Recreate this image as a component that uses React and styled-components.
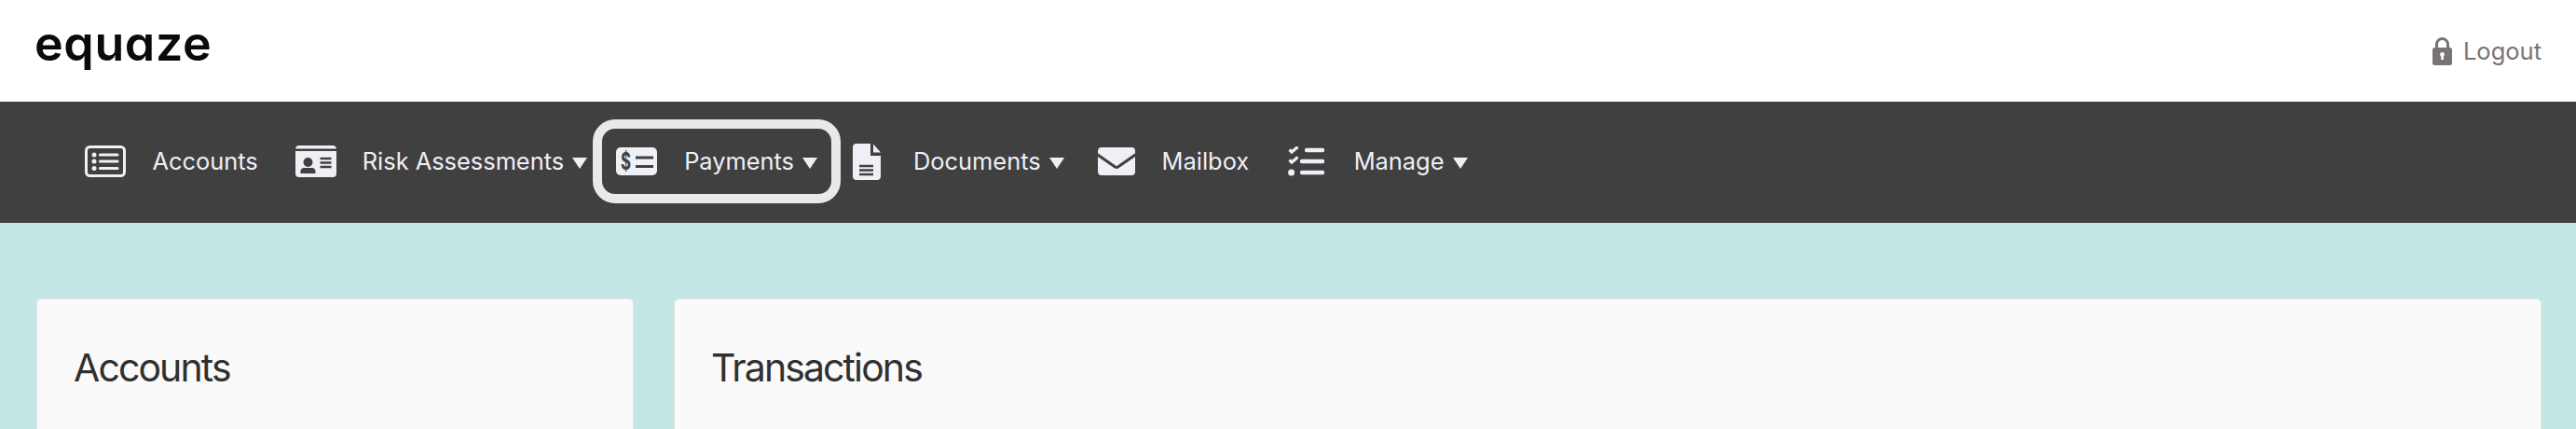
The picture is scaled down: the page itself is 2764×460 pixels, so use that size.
import React from 'react'
import styled, { createGlobalStyle } from 'styled-components'

const GlobalStyle = createGlobalStyle`
  html, body {
    margin: 0;
    padding: 0;
    background: #c4e7e6;
    font-family: Inter, "Liberation Sans", sans-serif;
  }
  * { box-sizing: border-box; }
`
const Page = styled.div`
  height: 100vh;
  overflow: hidden;
  display: flex;
  flex-direction: column;
  background: #c4e7e6;
`
const Header = styled.header`
  height: 109px;
  flex: none;
  display: flex;
  align-items: center;
  justify-content: space-between;
  padding: 0 37px;
  background: #ffffff;
`
const Logo = styled.div`
  font-size: 52px;
  font-weight: 600;
  line-height: 1;
  letter-spacing: 0.6px;
  color: #0a0a0a;
  font-feature-settings: 'cv11';
  margin-top: -16px;
`
const Logout = styled.a`
  display: flex;
  align-items: center;
  gap: 12px;
  font-size: 25.5px;
  color: #7a7374;
`
const Nav = styled.nav`
  height: 130px;
  flex: none;
  display: flex;
  align-items: center;
  padding: 0 0 2px 71px;
  background: #404040;
`
const NavItem = styled.a`
  height: 80px;
  display: flex;
  align-items: center;
  gap: ${props => props.gap}px;
  padding: 0 20px;
  margin-left: ${props => props.shift || 0}px;
  font-size: 25.4px;
  color: #efeff6;
  border-radius: 19px;
  outline: ${props => (props.focused ? '10px solid #e9e9e9' : 'none')};
  outline-offset: -5px;
`
const Label = styled.span`
  display: flex;
  align-items: center;
  gap: 9px;
  margin-top: -1px;
`
const Caret = styled.i`
  width: 0;
  height: 0;
  margin-top: 4px;
  border-left: 8px solid transparent;
  border-right: 8px solid transparent;
  border-top: 12px solid #efeff6;
`
const Main = styled.main`
  flex: 1;
  display: grid;
  grid-template-columns: 641px 1fr;
  gap: 43px;
  padding: 81px 37px 0 39px;
`
const Card = styled.section`
  height: 300px;
  padding: 49px 39px;
  background: #fafafa;
  border: 1px solid #e2e2e2;
  border-radius: 5px;
`
const Title = styled.h2`
  margin: 0;
  font-size: 41px;
  font-weight: 400;
  line-height: 48px;
  letter-spacing: -1.9px;
  color: #303030;
`
const Svg = styled.svg`
  display: block;
  flex: none;
`

const ICON = '#efeff6'
const DARK = '#404040'

const ListIcon = () => (
  <Svg width="44" height="34" viewBox="0 0 44 34">
    <rect x="1.5" y="1.5" width="41" height="31" rx="4" fill="none" stroke={ICON} strokeWidth="3" />
    <circle cx="10" cy="10" r="2.5" fill={ICON} />
    <circle cx="10" cy="17" r="2.5" fill={ICON} />
    <circle cx="10" cy="24.5" r="2.5" fill={ICON} />
    <path d="M16.5 10H35M16.5 17H35M16.5 24.5H35" stroke={ICON} strokeWidth="3.2" strokeLinecap="round" />
  </Svg>
)

const IdIcon = () => (
  <Svg width="44" height="34" viewBox="0 0 44 34">
    <path d="M4 0H40A4 4 0 0 1 44 3.5H0A4 4 0 0 1 4 0Z" fill={ICON} />
    <path d="M0 6H44V30A4 4 0 0 1 40 34H4A4 4 0 0 1 0 30Z" fill={ICON} />
    <circle cx="13.5" cy="18" r="5" fill={DARK} />
    <path d="M5.5 30V28A4 4 0 0 1 9.5 24H17.5A4 4 0 0 1 21.5 28V30Z" fill={DARK} />
    <path d="M26.5 14H38.5M26.5 18.5H38.5M26.5 23H38.5" stroke={DARK} strokeWidth="2.4" />
  </Svg>
)

const MoneyIcon = () => (
  <Svg width="44" height="30" viewBox="0 0 44 30">
    <rect width="44" height="30" rx="5" fill={ICON} />
    <text x="5" y="24" textLength="11" lengthAdjust="spacingAndGlyphs" fontFamily="Inter" fontSize="25" fontWeight="700" fill={DARK}>$</text>
    <path d="M21 11H40M21 20.5H40" stroke={DARK} strokeWidth="3" />
  </Svg>
)

const DocIcon = () => (
  <Svg width="30" height="39" viewBox="0 0 30 39">
    <path d="M4 0H19V13H30V35A4 4 0 0 1 26 39H4A4 4 0 0 1 0 35V4A4 4 0 0 1 4 0Z" fill={ICON} />
    <path d="M22 0.5L30 9.5H22Z" fill={ICON} />
    <path d="M7 24H22M7 28.5H22M7 33H22" stroke={DARK} strokeWidth="2.4" />
  </Svg>
)

const MailIcon = () => (
  <Svg width="40" height="30" viewBox="0 0 40 30">
    <rect width="40" height="30" rx="4" fill={ICON} />
    <path d="M-1 7.5L18.5 21Q20 22 21.5 21L41 7.5" fill="none" stroke={DARK} strokeWidth="3" />
  </Svg>
)

const TasksIcon = () => (
  <Svg width="39" height="32" viewBox="0 0 39 32">
    <path d="M1.5 3.5L4 6L10.5 0.5M1.5 14.5L4 17L10.5 11.5" fill="none" stroke={ICON} strokeWidth="3.2" />
    <circle cx="3.6" cy="28" r="3.5" fill={ICON} />
    <path d="M20 4H37M15 16H37M15 28H37" stroke={ICON} strokeWidth="4.4" strokeLinecap="round" />
  </Svg>
)

const LockIcon = () => (
  <Svg width="21" height="30" viewBox="0 0 21 30">
    <path d="M4.5 13V7.5A6 6 0 0 1 16.5 7.5V13" fill="none" stroke="#7a7374" strokeWidth="3" />
    <rect y="11" width="21" height="19" rx="2.5" fill="#7a7374" />
    <circle cx="10.5" cy="18.5" r="2.4" fill="#ffffff" />
    <path d="M9.6 19H11.4L12 24H9Z" fill="#ffffff" />
  </Svg>
)

const items = [
  { label: 'Accounts', icon: <ListIcon />, gap: 28.5 },
  { label: 'Risk Assessments', icon: <IdIcon />, caret: true, gap: 28 },
  { label: 'Payments', icon: <MoneyIcon />, caret: true, focused: true, gap: 29, shift: -9 },
  { label: 'Documents', icon: <DocIcon />, caret: true, gap: 35.5, shift: -2.5 },
  { label: 'Mailbox', icon: <MailIcon />, gap: 29, shift: -4 },
  { label: 'Manage', icon: <TasksIcon />, caret: true, gap: 32, shift: 1.5 }
]

export default function App() {
  return (
    <Page>
      <GlobalStyle />
      <Header>
        <Logo>equaze</Logo>
        <Logout>
          <LockIcon />
          Logout
        </Logout>
      </Header>
      <Nav>
        {items.map(item => (
          <NavItem key={item.label} gap={item.gap} shift={item.shift} focused={item.focused}>
            {item.icon}
            <Label>
              {item.label}
              {item.caret && <Caret />}
            </Label>
          </NavItem>
        ))}
      </Nav>
      <Main>
        <Card>
          <Title>Accounts</Title>
        </Card>
        <Card>
          <Title>Transactions</Title>
        </Card>
      </Main>
    </Page>
  )
}
